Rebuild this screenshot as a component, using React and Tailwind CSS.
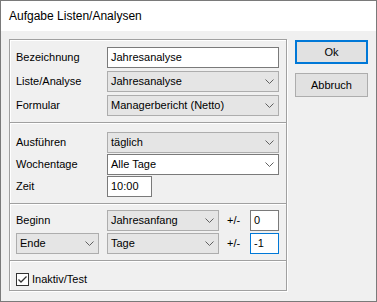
import React from "react";

const font = { fontFamily: '"Liberation Sans", Arial, sans-serif' };

const Chevron = () => (
  <svg width="9" height="5" viewBox="0 0 9 5" className="shrink-0">
    <path d="M0.5 0.5 L4.5 4.5 L8.5 0.5" fill="none" stroke="#606060" strokeWidth="1" />
  </svg>
);

const Combo = ({ value, white, className = "" }) => (
  <div
    className={`h-[21px] flex items-center justify-between pl-[3px] pr-[4px] border ${
      white ? "bg-white border-[#7a7a7a]" : "bg-[#e5e5e5] border-[#adadad]"
    } ${className}`}
  >
    <span className="leading-none">{value}</span>
    <Chevron />
  </div>
);

const Field = ({ value, className = "", focused }) => (
  <div
    className={`h-[21px] flex items-center pl-[3px] bg-white border ${
      focused ? "border-[#0078d7]" : "border-[#7a7a7a]"
    } ${className}`}
  >
    <span className="leading-none">{value}</span>
  </div>
);

const Row = ({ label, children }) => (
  <div className="h-[21px] flex items-center">
    <div className="w-[91px] shrink-0">{label}</div>
    {children}
  </div>
);

const Divider = () => (
  <div>
    <div className="h-px bg-[#a0a0a0]" />
    <div className="h-px bg-white" />
  </div>
);

export default function App() {
  return (
    <div
      className="w-[377px] h-[302px] border border-[#7a7a7a] flex flex-col text-[11px] text-black"
      style={font}
    >
      {/* title bar */}
      <div className="h-[30px] shrink-0 bg-white flex items-center pl-[8px] text-[12px]">
        Aufgabe Listen/Analysen
      </div>

      <div className="flex-1 bg-[#f0f0f0] flex pt-[8px] pl-[8px]">
        {/* group box */}
        <div className="w-[278px] h-[252px] border border-[#a0a0a0] shadow-[inset_1px_1px_0_#fff,1px_1px_0_#fff] flex flex-col">
          <div className="pt-[7px] pb-[6px] pl-[6px] pr-[6px] flex flex-col gap-[3px]">
            <Row label="Bezeichnung">
              <Field value="Jahresanalyse" className="w-[172px]" />
            </Row>
            <Row label="Liste/Analyse">
              <Combo value="Jahresanalyse" className="w-[172px]" />
            </Row>
            <Row label="Formular">
              <Combo value="Managerbericht (Netto)" className="w-[172px]" />
            </Row>
          </div>
          <Divider />
          <div className="pt-[8px] pb-[6px] pl-[6px] pr-[6px] flex flex-col gap-[1px]">
            <Row label="Ausführen">
              <Combo value="täglich" className="w-[172px]" />
            </Row>
            <Row label="Wochentage">
              <Combo value="Alle Tage" white className="w-[172px]" />
            </Row>
            <Row label="Zeit">
              <Field value="10:00" className="w-[45px]" />
            </Row>
          </div>
          <Divider />
          <div className="pt-[5px] pb-[6px] pl-[6px] pr-[6px] flex flex-col gap-[2px]">
            <Row label="Beginn">
              <Combo value="Jahresanfang" className="w-[112px]" />
              <span className="ml-[8px] w-[23px]">+/-</span>
              <Field value="0" className="w-[29px]" />
            </Row>
            <div className="h-[21px] flex items-center">
              <Combo value="Ende" className="w-[83px]" />
              <div className="w-[8px]" />
              <Combo value="Tage" className="w-[112px]" />
              <span className="ml-[8px] w-[23px]">+/-</span>
              <Field value="-1" focused className="w-[29px]" />
            </div>
          </div>
          <Divider />
          <div className="flex-1 pt-[11px] pl-[6px] flex items-start">
            <div className="flex items-center h-[13px]">
              <div className="w-[13px] h-[13px] border border-[#333333] bg-white flex items-center justify-center">
                <svg width="11" height="11" viewBox="0 0 11 11">
                  <path d="M1.5 5.5 L4 8 L9.5 2.5" fill="none" stroke="#333333" strokeWidth="1.3" />
                </svg>
              </div>
              <span className="ml-[3px] leading-none">Inaktiv/Test</span>
            </div>
          </div>
        </div>

        {/* buttons */}
        <div className="ml-[8px] pt-[1px] flex flex-col gap-[9px]">
          <button className="w-[73px] h-[24px] bg-[#e1e1e1] border-2 border-[#0078d7] flex items-center justify-center">
            Ok
          </button>
          <button className="w-[73px] h-[24px] bg-[#e1e1e1] border border-[#adadad] flex items-center justify-center">
            Abbruch
          </button>
        </div>
      </div>
    </div>
  );
}
